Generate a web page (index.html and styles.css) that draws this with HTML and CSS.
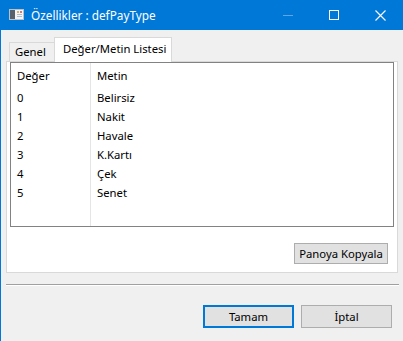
FILE: index.html
```html
<!DOCTYPE html>
<html lang="tr">
<head>
    <meta charset="UTF-8">
    <title>Özellikler : defPayType</title>
    <link rel="stylesheet" href="styles.css">
</head>
<body>
    <div class="window">
        <div class="titlebar">
            <svg class="app-icon" width="15" height="11" viewBox="0 0 15 11">
                <rect x="0.5" y="0.5" width="14" height="10" fill="#f4f4f4" stroke="#b8c2ca"/>
                <rect x="1" y="1" width="5" height="9" fill="#56616b"/>
                <rect x="8" y="2" width="2" height="2" fill="#d9b36a"/>
                <rect x="11" y="2" width="2" height="2" fill="#d27a7a"/>
                <rect x="8" y="5" width="5" height="1" fill="#a9c0d0"/>
                <rect x="8" y="7" width="5" height="1" fill="#a9c0d0"/>
            </svg>
            <span class="title">Özellikler : defPayType</span>
            <div class="controls">
                <div class="ctl">
                    <svg width="10" height="10" viewBox="0 0 10 10"><line x1="0" y1="5.5" x2="10" y2="5.5" stroke="#5ea6e6" stroke-width="1"/></svg>
                </div>
                <div class="ctl">
                    <svg width="10" height="10" viewBox="0 0 10 10"><rect x="0.5" y="0.5" width="9" height="9" fill="none" stroke="#fff" stroke-width="1"/></svg>
                </div>
                <div class="ctl">
                    <svg width="11" height="11" viewBox="0 0 11 11"><path d="M0.5 0.5 L10.5 10.5 M10.5 0.5 L0.5 10.5" stroke="#fff" stroke-width="1.1"/></svg>
                </div>
            </div>
        </div>

        <div class="content">
            <div class="tabs">
                <div class="tab">Genel</div>
                <div class="tab active">Değer/Metin Listesi</div>
            </div>
            <div class="panel">
                <div class="listview">
                    <div class="lv-row lv-head">
                        <div class="col-val">Değer</div>
                        <div class="col-text">Metin</div>
                    </div>
                    <div class="lv-row"><div class="col-val">0</div><div class="col-text">Belirsiz</div></div>
                    <div class="lv-row"><div class="col-val">1</div><div class="col-text">Nakit</div></div>
                    <div class="lv-row"><div class="col-val">2</div><div class="col-text">Havale</div></div>
                    <div class="lv-row"><div class="col-val">3</div><div class="col-text">K.Kartı</div></div>
                    <div class="lv-row"><div class="col-val">4</div><div class="col-text">Çek</div></div>
                    <div class="lv-row"><div class="col-val">5</div><div class="col-text">Senet</div></div>
                    <div class="lv-fill"><div class="col-val"></div><div class="col-text"></div></div>
                </div>
                <div class="panel-actions">
                    <button class="btn btn-copy">Panoya Kopyala</button>
                </div>
            </div>

            <div class="separator"></div>

            <div class="dialog-actions">
                <button class="btn btn-default">Tamam</button>
                <button class="btn">İptal</button>
            </div>
        </div>
    </div>
</body>
</html>
```

FILE: styles.css
```css
body {
    margin: 0;
    padding: 0;
    font-family: "Noto Sans", "Open Sans", sans-serif;
    font-size: 11.3px;
    color: #000;
    background: #f0f0f0;
}
.window {
    width: 402px;
    height: 341px;
    border-left: 1px solid #0078d7;
    background: #f0f0f0;
    display: flex;
    flex-direction: column;
}
.titlebar {
    height: 30px;
    background: #0078d7;
    color: #fff;
    display: flex;
    align-items: center;
}
.app-icon {
    margin-left: 8px;
    margin-top: -1px;
}
.title {
    margin-left: 7px;
    font-size: 11.8px;
    margin-top: -1px;
}
.controls {
    margin-left: auto;
    display: flex;
    height: 100%;
}
.ctl {
    width: 46px;
    height: 100%;
    display: flex;
    align-items: center;
    justify-content: center;
}

.content {
    padding: 7px 5px 0 5px;
    display: flex;
    flex-direction: column;
}
.tabs {
    display: flex;
    align-items: flex-end;
    padding-left: 3px;
    height: 24px;
}
.tab {
    height: 19px;
    box-sizing: border-box;
    border: 1px solid #d9d9d9;
    border-bottom: none;
    border-right: none;
    padding: 0 0 0 5px;
    width: 45px;
    line-height: 18px;
    white-space: nowrap;
    background: #f0f0f0;
}
.tab.active {
    height: 25px;
    width: 118px;
    border-right: 1px solid #d9d9d9;
    background: #fff;
    padding: 0 0 0 8px;
    line-height: 22px;
    margin-bottom: -1px;
    position: relative;
    z-index: 1;
}
.panel {
    height: 212px;
    box-sizing: border-box;
    border: 1px solid #d9d9d9;
    background: #fff;
    padding: 0 3px;
    display: flex;
    flex-direction: column;
}
.listview {
    height: 165px;
    box-sizing: border-box;
    border: 1px solid #828282;
    display: flex;
    flex-direction: column;
    overflow: hidden;
}
.lv-row {
    display: flex;
    height: 19px;
    line-height: 19px;
    flex-shrink: 0;
}
.lv-head {
    height: 25px;
    line-height: 25px;
}
.lv-fill {
    display: flex;
    flex: 1;
}
.col-val {
    width: 80px;
    padding-left: 6px;
    box-sizing: border-box;
    border-right: 1px solid #e5e5e5;
}
.col-text {
    padding-left: 6px;
    flex: 1;
}
.panel-actions {
    display: flex;
    justify-content: flex-end;
    margin-top: 16px;
    padding-right: 6px;
}
.btn {
    font-family: "Noto Sans", "Open Sans", sans-serif;
    font-size: 11.3px;
    color: #000;
    background: #e1e1e1;
    border: 1px solid #adadad;
    box-sizing: border-box;
    padding: 0;
    margin: 0;
}
.btn-copy {
    width: 94px;
    height: 21px;
}
.separator {
    margin-top: 11px;
    margin-right: -1px;
    height: 0;
    border-top: 1px solid #a0a0a0;
    border-bottom: 1px solid #fff;
}
.dialog-actions {
    display: flex;
    justify-content: flex-end;
    gap: 7px;
    margin-top: 19px;
    padding-right: 6px;
}
.dialog-actions .btn {
    width: 91px;
    height: 23px;
}
.btn-default {
    border: 2px solid #0078d7;
}
```
